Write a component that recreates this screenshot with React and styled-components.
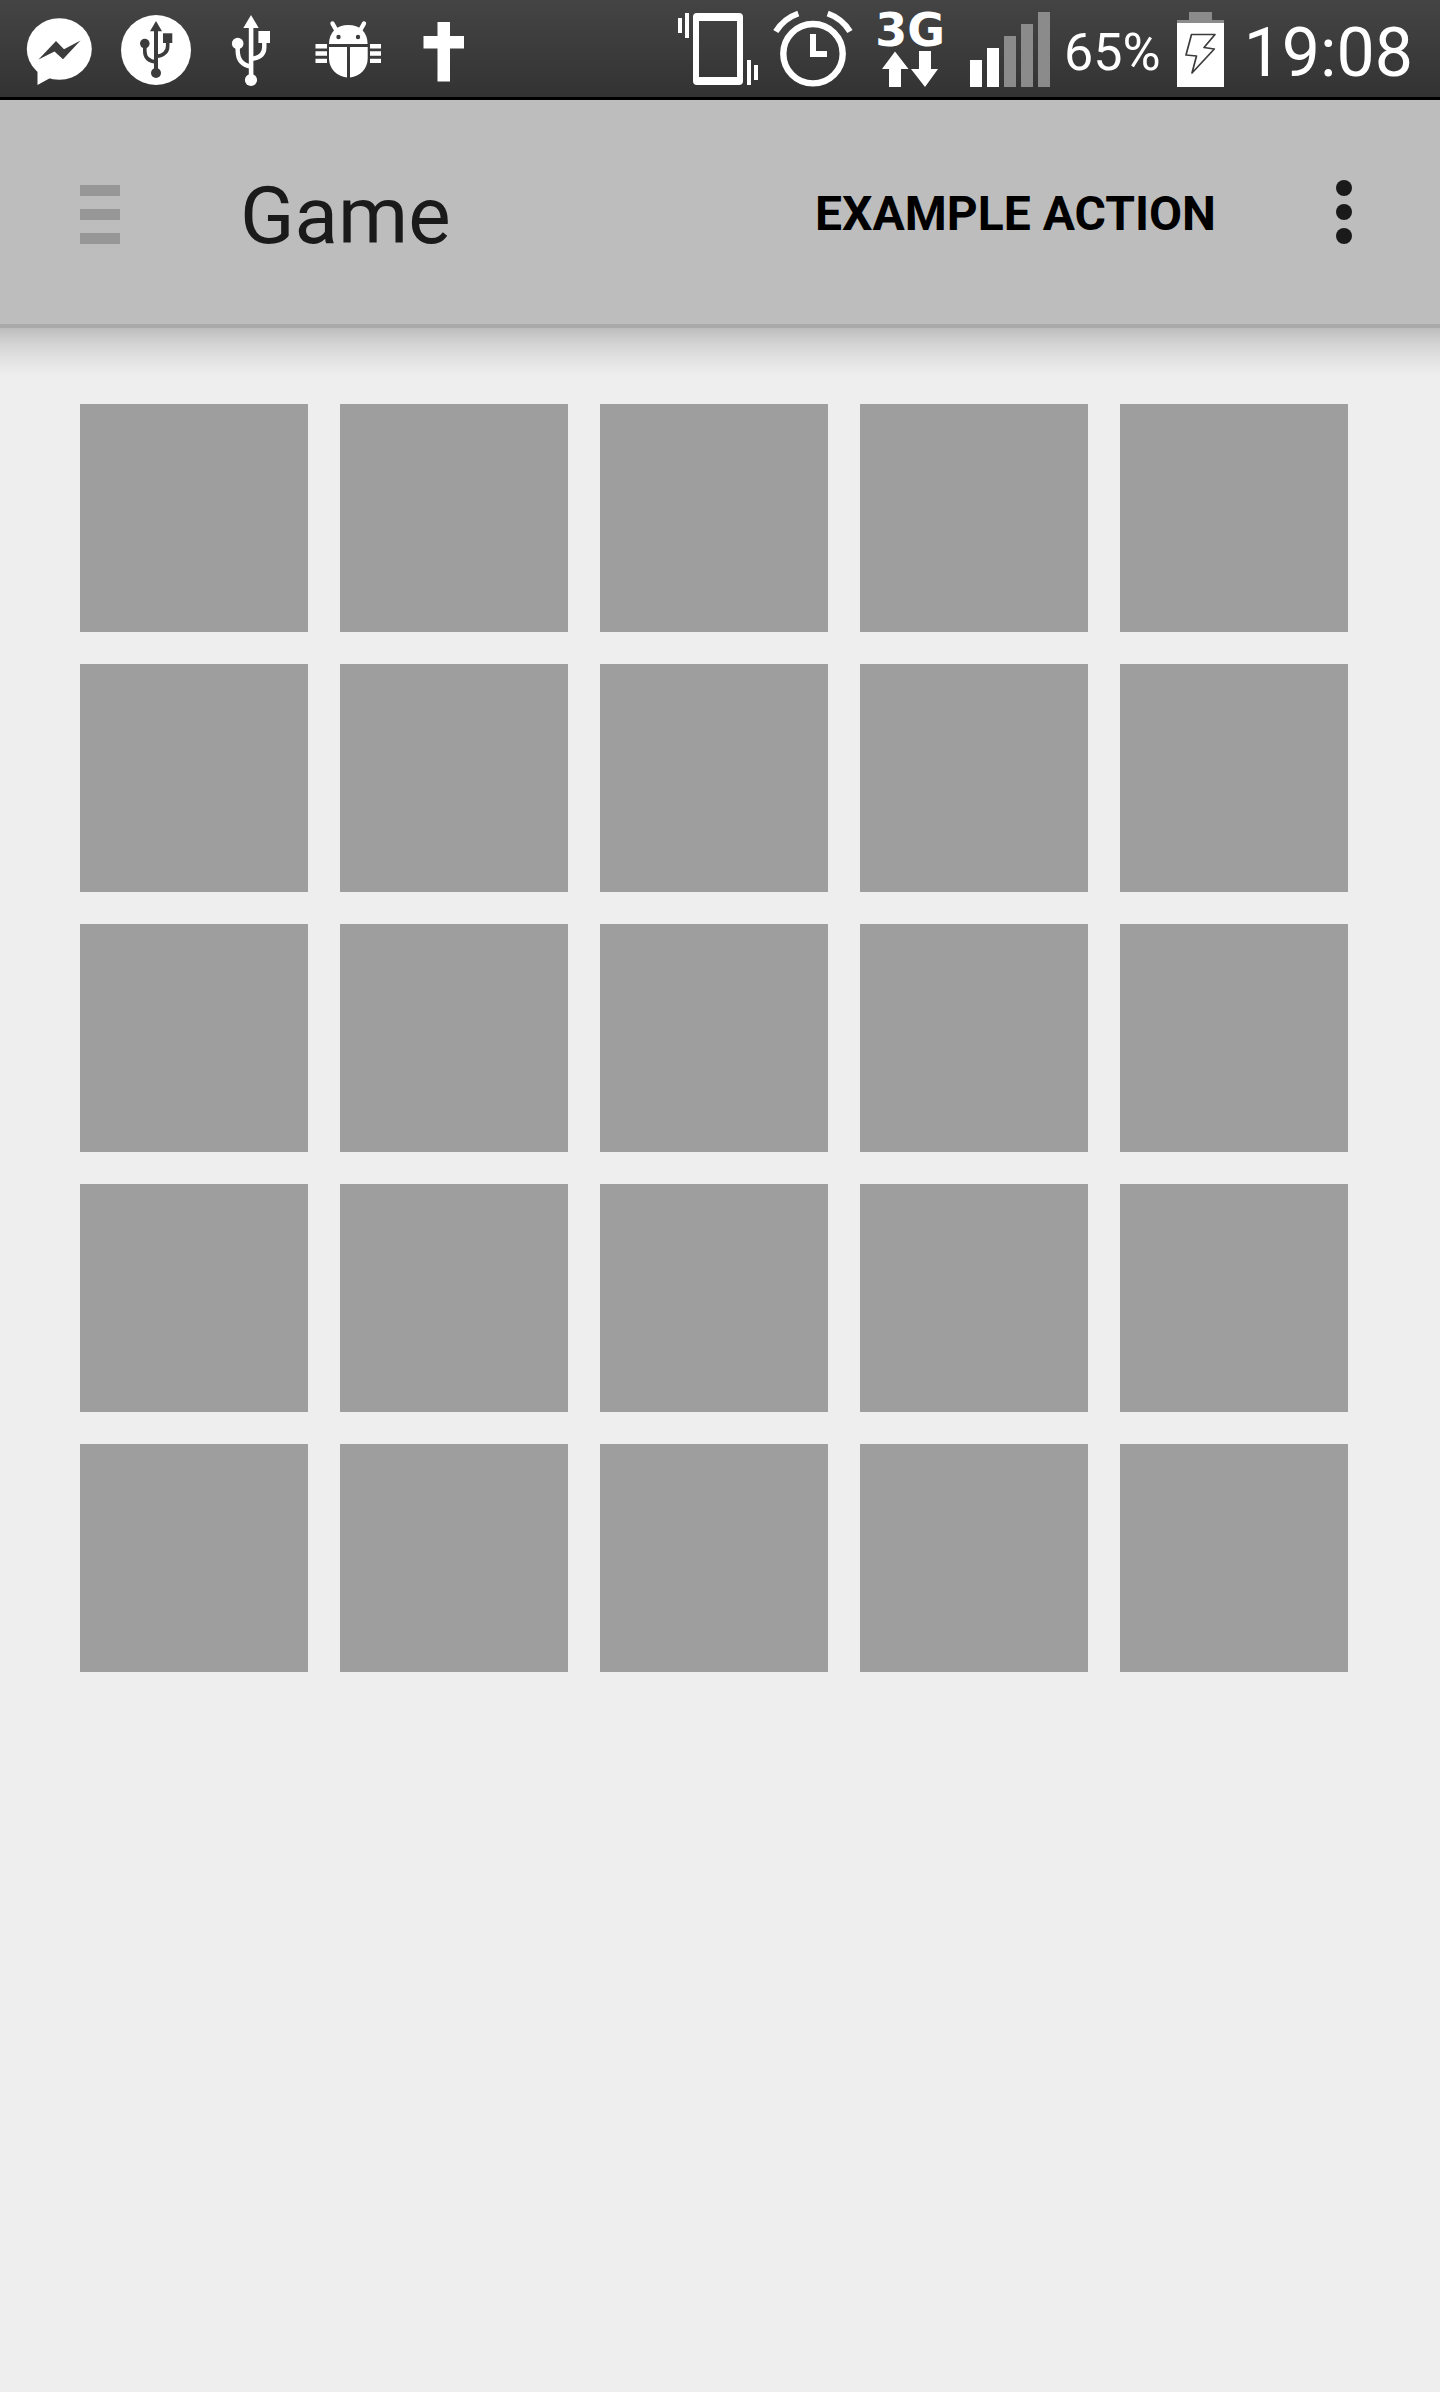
import React, { useState } from "react";
import styled, { createGlobalStyle } from "styled-components";

const Global = createGlobalStyle`
  * { box-sizing: border-box; }
  body { margin: 0; background: #eeeeee; font-family: Roboto, "Noto Sans", sans-serif; }
`;

const Screen = styled.div`
  min-height: 100vh;
  background: #eeeeee;
`;

const StatusBar = styled.header`
  display: flex;
  justify-content: space-between;
  height: 100px;
  padding: 0 27px 0 11px;
  border-bottom: 3px solid #000;
  background: linear-gradient(#444444, #333333);
  color: #fff;
`;

const Group = styled.div`
  display: flex;
  align-items: center;
`;

const Glyph = styled.svg`
  display: block;
  flex: none;
  width: ${(p) => p.$width || 96}px;
  height: 97px;
  fill: #fff;
`;

const Network = styled.div`
  display: flex;
  flex-direction: column;
  align-items: center;
  justify-content: flex-start;
  width: 96px;
  height: 97px;
  padding-top: 14px;
`;

const NetworkType = styled.span`
  font: bold 46px/32px "DejaVu Sans", sans-serif;
`;

const NetworkArrows = styled.svg`
  display: block;
  width: 56px;
  height: 36px;
  margin-top: 5px;
  fill: #fff;
`;

const Level = styled.span`
  margin: 8px 16px 0 10px;
  font-size: 52px;
  line-height: 60px;
`;

const Clock = styled.time`
  margin: 8px 0 0 20px;
  font-size: 68px;
  line-height: 80px;
`;

const Toolbar = styled.nav`
  display: flex;
  align-items: center;
  height: 228px;
  padding: 0 76px 0 68px;
  border-bottom: 4px solid #a9a9a9;
  background: #bdbdbd;
`;

const IconButton = styled.button`
  display: flex;
  flex-direction: column;
  align-items: center;
  gap: ${(p) => p.$gap}px;
  padding: ${(p) => p.$top || 12}px 12px 12px;
  border: 0;
  background: none;
  cursor: pointer;
`;

const Bar = styled.span`
  width: 40px;
  height: 11px;
  background: #979797;
`;

const Dot = styled.span`
  width: 16px;
  height: 16px;
  border-radius: 50%;
  background: #1a1a1a;
`;

const Title = styled.h1`
  flex: 1;
  margin: 0 0 0 108px;
  padding-top: 8px;
  color: #1a1a1a;
  font-size: 80px;
  font-weight: 400;
  line-height: 96px;
`;

const Action = styled.button`
  margin-right: 108px;
  padding: 4px 0 0;
  border: 0;
  background: none;
  color: #000;
  font: 700 48px/56px Roboto, "Noto Sans", sans-serif;
  text-transform: uppercase;
  cursor: pointer;
`;

const Content = styled.main`
  padding: 76px 92px 76px 80px;
  background: linear-gradient(#bdbdbd, #d4d4d4 16px, #e6e6e6 36px, #eeeeee 48px);
`;

const Board = styled.div`
  display: grid;
  grid-template-columns: repeat(5, 1fr);
  gap: 32px;
`;

const Tile = styled.button`
  aspect-ratio: 1;
  padding: 0;
  border: 0;
  background: #9e9e9e;
  cursor: pointer;
`;

const Messenger = () => (
  <Glyph viewBox="11 0 96 97" role="img" aria-label="Message">
    <ellipse cx="59.3" cy="49" rx="32.5" ry="30.8" />
    <path d="M37.5 66V85L52 77z" />
    <path d="M38.5 59.5L56 41l8 8.3L80.5 40.5 63 59.3 54.5 51.5z" fill="#3c3c3c" />
  </Glyph>
);

const UsbBadge = () => (
  <Glyph viewBox="107 0 96 97" role="img" aria-label="USB debugging">
    <circle cx="156" cy="50" r="35" />
    <g fill="#3c3c3c">
      <path d="M156 21l-6 10.3h12z" />
      <path d="M154 30h4v40h-4z" />
      <circle cx="156" cy="73" r="5" />
      <circle cx="144.8" cy="43.6" r="4.8" />
      <path d="M163 33.3h9.3V43H163z" />
      <path
        d="M144.8 45v6q0 10 11.2 11M167.7 42v4q0 9-11.7 10.500"
        fill="none"
        stroke="#3c3c3c"
        strokeWidth="3.6"
      />
    </g>
  </Glyph>
);

const Usb = () => (
  <Glyph viewBox="203 0 96 97" role="img" aria-label="USB connected">
    <path d="M251 15l-7.700 13h15.400z" />
    <path d="M248.800 27h4.600v50h-4.600z" />
    <circle cx="251" cy="80" r="6.100" />
    <circle cx="237.700" cy="43.500" r="5.800" />
    <path d="M258.400 31H270v12h-11.600z" />
    <path
      d="M237.700 45v5.500q0 14 13.300 16M264.300 42v5q0 11-13.300 11.800"
      fill="none"
      stroke="#fff"
      strokeWidth="4.400"
    />
  </Glyph>
);

const Bug = () => (
  <Glyph viewBox="299 0 96 97" role="img" aria-label="Debugger attached">
    <path d="M329 44c0-12 8-19 19.300-19s19.300 7 19.300 19z" />
    <path d="M332.500 23.500l4.500 8M364 23.500l-4.500 8" stroke="#fff" strokeWidth="4.400" strokeLinecap="round" />
    <circle cx="338.500" cy="37" r="2.200" fill="#3c3c3c" />
    <circle cx="358" cy="37" r="2.200" fill="#3c3c3c" />
    <path d="M329 47h18v30.500c-10-1-18-9-18-19zM350 47h17.700v11.500c0 10-7.700 18-17.700 19z" />
    <path d="M315.500 44H327v4.500h-11.500zM315.500 51.300H327v4.400h-11.500zM315.500 58.700H327V63h-11.500z" />
    <path d="M370 44h11v4.500h-11zM370 51.300h11v4.400h-11zM370 58.700h11V63h-11z" />
  </Glyph>
);

const Cross = () => (
  <Glyph viewBox="395 0 96 97" role="img" aria-label="Daily reading">
    <path d="M437.500 22H450v14h14v12.500h-14v33h-12.500v-33h-14V36h14z" />
  </Glyph>
);

const Vibrate = () => (
  <Glyph viewBox="669 0 96 97" role="img" aria-label="Vibrate">
    <path d="M677 18h4v15h-4zM684 13h4v25h-4zM746 60h4v25h-4zM753 65h4v15h-4z" />
    <path
      fillRule="evenodd"
      d="M696 13h42q4 0 4 4v64q0 4-4 4h-42q-4 0-4-4V17q0-4 4-4zM698 21v56h38V21z"
    />
  </Glyph>
);

const Alarm = () => (
  <Glyph viewBox="765 0 96 97" role="img" aria-label="Alarm set">
    <circle cx="812" cy="53.700" r="29.700" fill="none" stroke="#fff" strokeWidth="6.400" />
    <path d="M809 34h6v17h11v6h-17z" />
    <path
      d="M774.800 31.500Q783 18.500 797.300 13.500M826.700 13.500Q841 18.500 849 31.500"
      fill="none"
      stroke="#fff"
      strokeWidth="6"
    />
  </Glyph>
);

const Signal = () => (
  <Glyph viewBox="957 0 96 97" role="img" aria-label="Signal strength 2 of 5">
    <path d="M969 60h12v27h-12zM986 48h12v39h-12z" />
    <path d="M1003 36h12v51h-12zM1020 24h12v63h-12zM1037 12h12v75h-12z" fill="#8b8b8b" />
  </Glyph>
);

const Battery = () => (
  <Glyph viewBox="1176 0 47 97" $width={47} role="img" aria-label="Charging">
    <path d="M1188 12h23v8h12v3h-47v-3h12z" fill="#8b8b8b" />
    <path d="M1176 23h47v64h-47z" />
    <path
      d="M1190.500 34.500H1214l-11 13 10.300 1.500L1191 73l4.500-17-10.500-1z"
      fill="none"
      stroke="#3c3c3c"
      strokeWidth="1.700"
      strokeLinejoin="round"
    />
  </Glyph>
);

const TILES = Array.from({ length: 25 }, (_, i) => i + 1);

export default function App() {
  const [, setSelected] = useState(null);

  return (
    <Screen>
      <Global />
      <StatusBar>
        <Group>
          <Messenger />
          <UsbBadge />
          <Usb />
          <Bug />
          <Cross />
        </Group>
        <Group>
          <Vibrate />
          <Alarm />
          <Network>
            <NetworkType>3G</NetworkType>
            <NetworkArrows viewBox="882 51 56 36" aria-hidden="true">
              <path d="M895 51.500L908.500 69H901v18h-12V69h-7z" />
              <path d="M919 51h12v18h7l-13 18-14-18h8z" />
            </NetworkArrows>
          </Network>
          <Signal />
          <Level>65%</Level>
          <Battery />
          <Clock>19:08</Clock>
        </Group>
      </StatusBar>
      <Toolbar>
        <IconButton $gap={13} $top={16} aria-label="Open navigation">
          <Bar />
          <Bar />
          <Bar />
        </IconButton>
        <Title>Game</Title>
        <Action>Example action</Action>
        <IconButton $gap={8} aria-label="More options">
          <Dot />
          <Dot />
          <Dot />
        </IconButton>
      </Toolbar>
      <Content>
        <Board>
          {TILES.map((n) => (
            <Tile key={n} aria-label={`Tile ${n}`} onClick={() => setSelected(n)} />
          ))}
        </Board>
      </Content>
    </Screen>
  );
}
